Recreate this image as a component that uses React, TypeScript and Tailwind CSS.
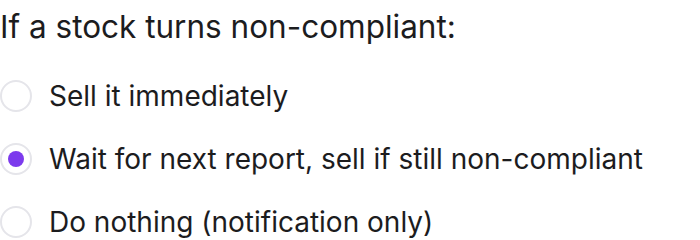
import * as React from "react";

const options = [
  { id: "sell", label: "Sell it immediately" },
  { id: "wait", label: "Wait for next report, sell if still non-compliant" },
  { id: "nothing", label: "Do nothing (notification only)" },
];

export default function App() {
  const [value, setValue] = React.useState("wait");

  return (
    <div className="w-[700px] h-[240px] bg-white text-[#1c1c1e] font-['Inter',sans-serif] overflow-hidden">
      <p className="text-[31.5px] leading-[40px] pt-[7px]">
        If a stock turns non-compliant:
      </p>
      <div className="flex flex-col gap-[31px] mt-[33px]">
        {options.map((opt) => (
          <label
            key={opt.id}
            className="flex items-center gap-[17px] cursor-pointer"
            onClick={() => setValue(opt.id)}
          >
            <span className="w-[32px] h-[32px] shrink-0 rounded-full border-2 border-[#e5e5ea] bg-white flex items-center justify-center">
              {value === opt.id && (
                <span className="w-[16px] h-[16px] rounded-full bg-[#7c3aed]" />
              )}
            </span>
            <span className="text-[28px] leading-[32px]">{opt.label}</span>
          </label>
        ))}
      </div>
    </div>
  );
}
